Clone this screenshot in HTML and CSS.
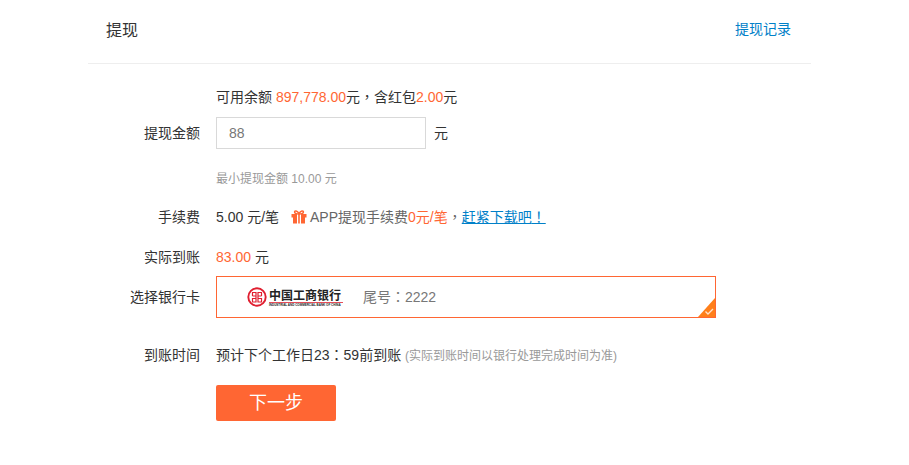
FILE: index.html
```html
<!DOCTYPE html>
<html lang="zh-CN">
<head>
    <meta charset="UTF-8">
    <meta name="viewport" content="width=device-width, initial-scale=1.0">
    <title>提现</title>
    <link rel="stylesheet" href="styles.css">
</head>
<body>
    <div class="container">
        <div class="header">
            <h1>提现</h1>
            <a href="#">提现记录</a>
        </div>

        <form class="form">
            <div class="row">
                <p class="field">可用余额 <span class="money">897,778.00</span>元<span class="mark" lang="zh-TW">，</span>含红包<span class="money">2.00</span>元</p>
            </div>

            <div class="row row-amount">
                <label class="name" for="amount">提现金额</label>
                <div class="field amount">
                    <input type="text" id="amount" value="88">
                    <span>元</span>
                </div>
            </div>

            <div class="row row-hint">
                <p class="field hint">最小提现金额 10.00 元</p>
            </div>

            <div class="row row-fee">
                <span class="name">手续费</span>
                <div class="field fee">
                    <span>5.00 元/笔</span>
                    <svg class="gift" viewBox="0 0 16 14" width="16" height="14">
                        <path d="M8 4C5.500 4 3.600 3.200 3.600 2s2.600-2 4.400 1.800C9.800 0 12.400 .800 12.400 2S10.500 4 8 4z" fill="none" stroke="#ff6633" stroke-width="1.500"/>
                        <path d="M.500 4H6v3.500H.500zM10 4h5.500v3.500H10zM7.200 4h1.600v9.500H7.200zM2 7.500h4v6H2zM10 7.500h4v6h-4z" fill="#ff6633"/>
                    </svg>
                    <span class="promo">APP提现手续费<span class="money">0元/笔</span><span class="mark" lang="zh-TW">，</span><a class="download" href="#">赶紧下载吧<span class="mark" lang="zh-TW">！</span></a></span>
                </div>
            </div>

            <div class="row row-actual">
                <span class="name">实际到账</span>
                <p class="field"><span class="money">83.00</span> 元</p>
            </div>

            <div class="row row-card">
                <span class="name">选择银行卡</span>
                <label class="field card">
                    <input type="radio" name="card" checked>
                    <svg class="bank-logo" viewBox="0 0 98 22" width="98" height="22" role="img" aria-label="中国工商银行">
                        <circle cx="10" cy="11" r="8.700" fill="none" stroke="#e01f30" stroke-width="1.900"/>
                        <path d="M5 6.500h4v3.500H5.500M15 6.500h-4v3.500h3.500M5.500 12.500H9v3.500H5.500zM14.500 12.500H11v3.500h3.500zM5.500 6.500v3.500M14.500 6.500v3.500M9 10v2.500M11 10v2.500" fill="none" stroke="#e01f30" stroke-width="1.200"/>
                        <text class="bank-cn" x="22" y="14">中国工商银行</text>
                        <path d="M22 16.500h74" stroke="#e01f30" stroke-width=".800"/>
                        <text class="bank-en" x="22" y="20">INDUSTRIAL AND COMMERCIAL BANK OF CHINA</text>
                    </svg>
                    <span>尾号<span class="mark" lang="zh-TW">：</span>2222</span>
                    <svg class="tick" viewBox="0 0 17 19" width="17" height="19">
                        <path d="M17 0v19H0z" fill="#ff7f1a"/>
                        <path d="M7.500 13.500l2.500 2.500 5-5" fill="none" stroke="#ffe3cc" stroke-width="1.400"/>
                    </svg>
                </label>
            </div>

            <div class="row row-time">
                <span class="name">到账时间</span>
                <p class="field">预计下个工作日23<span class="mark" lang="zh-TW">：</span>59前到账 <small>(实际到账时间以银行处理完成时间为准)</small></p>
            </div>

            <div class="row row-submit">
                <div class="field"><button type="submit" class="next-button">下一步</button></div>
            </div>
        </form>
    </div>
</body>
</html>
```

FILE: styles.css
```css
* {
    margin: 0;
    padding: 0;
    box-sizing: border-box;
}

body {
    background: #fff;
    color: #333;
    font-family: "Liberation Sans", "Noto Sans CJK SC", sans-serif;
    font-size: 14px;
    line-height: 20px;
}

input,
button {
    font: inherit;
}

a {
    color: #0080c8;
    text-decoration: none;
}

.container {
    max-width: 920px;
    margin: 0 auto;
    padding: 0 98px 0 88px;
}

.header {
    display: flex;
    justify-content: space-between;
    align-items: flex-start;
    padding: 19px 20px 20px 18px;
    border-bottom: 1px solid #eee;
}

.header h1 {
    font-size: 16px;
    font-weight: 400;
    line-height: 24px;
}

.form {
    padding-top: 23px;
}

.row {
    display: grid;
    grid-template-columns: 112px minmax(0, 1fr);
    column-gap: 16px;
    align-items: center;
}

.name {
    text-align: right;
}

.field {
    grid-column: 2;
}

.money {
    color: #ff6633;
}

/* centred full-width punctuation */
.mark {
    font-family: "Noto Sans CJK TC", sans-serif;
    line-height: 1;
}

.row-amount {
    margin-top: 10px;
}

.amount {
    display: flex;
    align-items: center;
    gap: 8px;
}

.amount input {
    width: 210px;
    height: 32px;
    padding: 0 12px;
    border: 1px solid #d9d9d9;
    color: #777;
}

.row-hint {
    margin-top: 20px;
}

.hint,
small {
    color: #999;
    font-size: 12px;
}

small {
    line-height: 1;
}

.row-fee {
    margin-top: 18px;
}

.fee {
    display: flex;
    align-items: center;
}

.gift {
    margin: 0 3px 0 12px;
}

.promo {
    color: #666;
}

.download {
    text-decoration: underline;
}

.row-actual {
    margin-top: 20px;
}

.row-card {
    margin-top: 9px;
}

.card {
    position: relative;
    display: flex;
    align-items: center;
    gap: 18px;
    max-width: 500px;
    height: 42px;
    padding-left: 30px;
    border: 1px solid #ff6633;
    color: #777;
    cursor: pointer;
}

.card input {
    position: absolute;
    opacity: 0;
}

.bank-cn {
    fill: #222;
    font-size: 12px;
    font-weight: 700;
}

.bank-en {
    fill: #222;
    font-size: 3px;
    font-weight: 700;
}

.tick {
    position: absolute;
    right: 0;
    bottom: 0;
}

.row-time {
    margin-top: 27px;
}

.row-submit {
    margin-top: 20px;
}

.next-button {
    display: block;
    width: 120px;
    height: 36px;
    border: none;
    border-radius: 2px;
    background: #ff6633;
    color: #fff;
    font-size: 18px;
    cursor: pointer;
}
```
